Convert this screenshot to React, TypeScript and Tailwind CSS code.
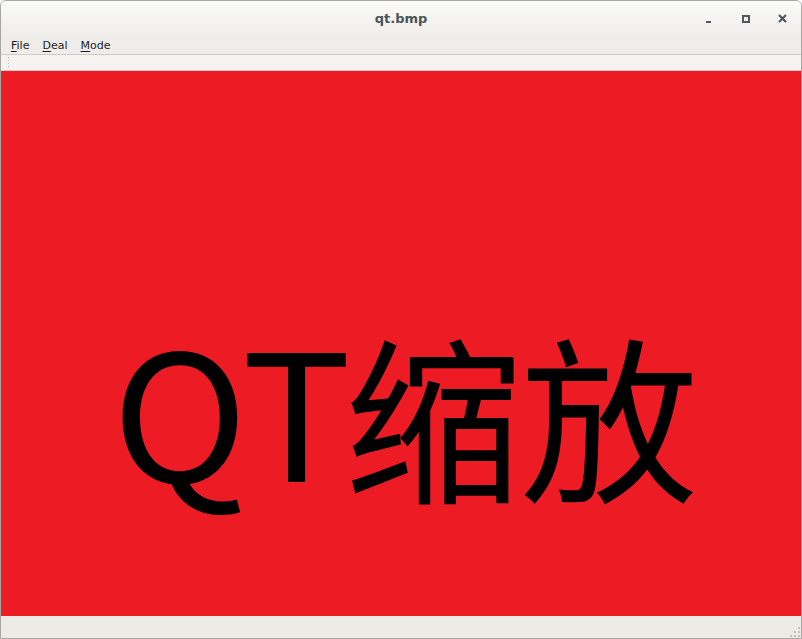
export default function App() {
  return (
    <div className="flex h-[639px] w-[802px] flex-col overflow-hidden rounded-t-[6px] border border-[#a8a6a2] bg-[#edebe7] font-['DejaVu_Sans',sans-serif]">
      {/* title bar */}
      <div className="relative flex h-[35px] shrink-0 items-center justify-center bg-gradient-to-b from-[#fbfbfa] to-[#efedea]">
        <span className="text-[13px] font-bold text-[#4b5457]">qt.bmp</span>
        <div className="absolute right-0 top-0 flex h-full items-center">
          <div className="flex w-[37px] justify-center">
            <span className="mt-[6px] block h-[2px] w-[5px] bg-[#4e5a5e]" />
          </div>
          <div className="flex w-[37px] justify-center">
            <span className="block h-[8px] w-[8px] border-2 border-[#4e5a5e]" />
          </div>
          <div className="flex w-[37px] justify-center">
            <svg width="9" height="9" viewBox="0 0 9 9">
              <path d="M1 1 L8 8 M8 1 L1 8" stroke="#4e5a5e" strokeWidth="2.2" />
            </svg>
          </div>
        </div>
      </div>
      {/* menu bar */}
      <div className="flex h-[18px] shrink-0 items-center gap-[13px] bg-[#efedea] pl-[10px] pt-[2px] text-[11px] text-[#1e1e1e]">
        <span><span className="underline underline-offset-2">F</span>ile</span>
        <span><span className="underline underline-offset-2">D</span>eal</span>
        <span><span className="underline underline-offset-2">M</span>ode</span>
      </div>
      {/* toolbar */}
      <div className="flex h-[17px] shrink-0 items-center border-t border-b border-[#cfccc7] bg-[#f5f3ef] pl-[6px]">
        <div className="h-[13px] w-[3px] bg-[radial-gradient(circle,#bdb9b3_0.7px,transparent_0.8px)] bg-[length:3px_3px]" />
      </div>
      {/* image area */}
      <div className="relative flex-1 bg-[#ed1c24]">
        <div className="absolute left-[111px] top-[245px] flex items-baseline whitespace-nowrap leading-none text-black font-['Noto_Sans_CJK_SC',sans-serif]">
          <span className="inline-block origin-left scale-x-[1.04] text-[176px] tracking-[-1px]">QT</span>
          <span className="ml-[3px] inline-block translate-y-[8px] text-[178px] tracking-[-2px]">缩放</span>
        </div>
      </div>
      {/* status bar */}
      <div className="flex h-[22px] shrink-0 items-end justify-end bg-[#edebe6] pb-[1px] pr-[1px]">
        <svg width="12" height="12" viewBox="0 0 12 12">
          {[
            [10, 2],
            [10, 6],
            [6, 6],
            [10, 10],
            [6, 10],
            [2, 10],
          ].map(([x, y]) => (
            <rect key={`${x}-${y}`} x={x} y={y} width="2" height="2" fill="#c3bfb9" />
          ))}
        </svg>
      </div>
    </div>
  );
}
